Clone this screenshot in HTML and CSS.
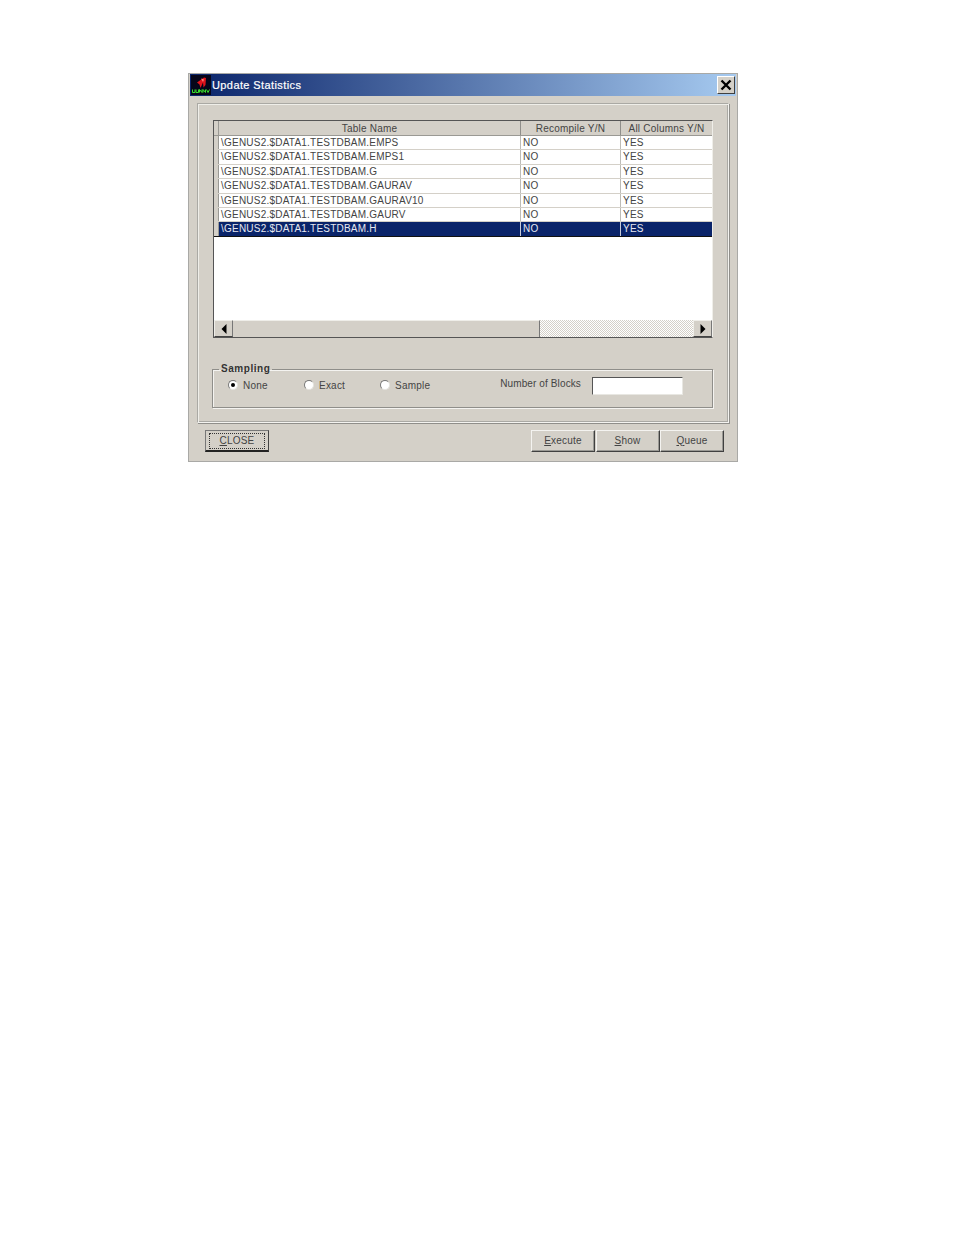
FILE: index.html
```html
<!DOCTYPE html>
<html lang="en">
<head>
<meta charset="utf-8">
<title>Update Statistics</title>
<link rel="stylesheet" href="styles.css">
</head>
<body>
<div class="window">
  <div class="titlebar">
    <svg class="appicon" viewBox="0 0 20 20" width="20" height="20" aria-hidden="true">
      <rect width="20" height="20" fill="#06061a"/>
      <path d="M6 7.5 13 2.5 15 3 14.5 10 12.5 12.5 12 7.5 9.5 13 8.5 9.5z" fill="#e0141c"/>
      <path d="M10 3.5 13 4.5 12 7z" fill="#ff8a80"/>
      <path d="M1.5 14.5v3h2.5v-3M5 14.5v3h2.5v-3M8.5 17.5v-3l2.5 3v-3M12 17.5v-3l2.5 3v-3M15.5 14.5l1.5 3 1.5-3" fill="none" stroke="#38e02c" stroke-width="1"/>
    </svg>
    <span class="title">Update Statistics</span>
    <span class="close">
      <svg viewBox="0 0 12 12" width="12" height="12" aria-hidden="true"><path d="M1.5 1.5 10.5 10.5M10.5 1.5 1.5 10.5" stroke="#000" stroke-width="2.4" fill="none"/></svg>
    </span>
  </div>
  <div class="panel">
    <div class="grid">
      <div class="row head">
        <span class="ind"></span><span class="c1">Table Name</span><span class="c2">Recompile Y/N</span><span class="c3">All Columns Y/N</span>
      </div>
      <div class="row"><span class="ind"></span><span class="c1">\GENUS2.$DATA1.TESTDBAM.EMPS</span><span class="c2">NO</span><span class="c3">YES</span></div>
      <div class="row"><span class="ind"></span><span class="c1">\GENUS2.$DATA1.TESTDBAM.EMPS1</span><span class="c2">NO</span><span class="c3">YES</span></div>
      <div class="row"><span class="ind"></span><span class="c1">\GENUS2.$DATA1.TESTDBAM.G</span><span class="c2">NO</span><span class="c3">YES</span></div>
      <div class="row"><span class="ind"></span><span class="c1">\GENUS2.$DATA1.TESTDBAM.GAURAV</span><span class="c2">NO</span><span class="c3">YES</span></div>
      <div class="row"><span class="ind"></span><span class="c1">\GENUS2.$DATA1.TESTDBAM.GAURAV10</span><span class="c2">NO</span><span class="c3">YES</span></div>
      <div class="row"><span class="ind"></span><span class="c1">\GENUS2.$DATA1.TESTDBAM.GAURV</span><span class="c2">NO</span><span class="c3">YES</span></div>
      <div class="row selected"><span class="ind"></span><span class="c1">\GENUS2.$DATA1.TESTDBAM.H</span><span class="c2">NO</span><span class="c3">YES</span></div>
      <div class="grid-empty"></div>
      <div class="scrollbar">
        <span class="sbtn"><svg viewBox="0 0 6 10" width="6" height="10" aria-hidden="true"><path d="M5.5 0V10L0.5 5z" fill="#000"/></svg></span>
        <span class="thumb"></span>
        <span class="track"></span>
        <span class="sbtn"><svg viewBox="0 0 6 10" width="6" height="10" aria-hidden="true"><path d="M.5 0V10L5.5 5z" fill="#000"/></svg></span>
      </div>
    </div>
    <fieldset class="sampling">
      <legend>Sampling</legend>
      <div class="opts">
        <span class="opt"><span class="radio on"></span>None</span>
        <span class="opt"><span class="radio"></span>Exact</span>
        <span class="opt"><span class="radio"></span>Sample</span>
        <span class="blocks"><span class="blocks-label">Number of Blocks</span><span class="input"></span></span>
      </div>
    </fieldset>
  </div>
  <div class="footer">
    <span class="btn default"><span class="focus"><u>C</u>LOSE</span></span>
    <span class="actions">
      <span class="btn"><span><u>E</u>xecute</span></span>
      <span class="btn"><span><u>S</u>how</span></span>
      <span class="btn"><span><u>Q</u>ueue</span></span>
    </span>
  </div>
</div>
</body>
</html>
```
FILE: styles.css
```css
* { box-sizing: border-box; }
html, body { margin: 0; padding: 0; background: #fff; }
body { height: 1235px; overflow: hidden; font-family: "Liberation Sans", Arial, sans-serif; font-size: 10px; letter-spacing: 0.22px; color: #444; }

.window { width: 550px; height: 389px; margin: 73px 0 0 188px; padding: 0 1px 1px; background: #d4d0c8; border: 1px solid #a9a9a6; }

.titlebar { height: 22px; display: flex; align-items: center; background: linear-gradient(90deg, #0a246a, #a6caf0); }
.appicon { margin-left: 1px; flex: none; }
.title { margin-left: 1px; font-size: 11px; letter-spacing: 0.4px; color: #fff; -webkit-text-stroke: 0.2px #fff; }
.close { margin-left: auto; width: 18px; height: 18px; margin-right: 1px; display: flex; align-items: center; justify-content: center; background: #d4d0c8; border: 1px solid; border-color: #fff #404040 #404040 #fff; }

.panel { height: 320px; margin: 7px 7px 0; padding: 16px 15px 0 15px; border: 1px solid; border-color: #aaa9a4 #f4f3f0 #f4f3f0 #aaa9a4; box-shadow: inset 1px 1px 0 #efeee9, inset -1px -1px 0 #aaa9a4, 1px 1px 0 #8f8e8a; }

.grid { width: 500px; height: 218px; display: flex; flex-direction: column; background: #fff; border-top: 1px solid #555; border-left: 1px solid #555; border-right: 1px solid #efeee9; border-bottom: 1px solid #555; }
.row { flex: none; height: 14.4px; display: flex; line-height: 13px; border-bottom: 1px solid #d4d0c8; white-space: nowrap; }
.row.head { background: #d4d0c8; border-bottom: 1px solid #9a9994; height: 15px; line-height: 15px; }
.ind { flex: none; width: 5px; background: #d4d0c8; border-right: 1px solid #9a9994; }
.c1 { flex: none; width: 302px; padding-left: 2px; border-right: 1px solid #bdbcb7; }
.c2 { flex: none; width: 100px; padding-left: 2px; border-right: 1px solid #bdbcb7; }
.c3 { flex: 1; padding-left: 2px; }
.head .c1, .head .c2, .head .c3 { text-align: center; padding-left: 0; border-right-color: #8f8e8a; }
.selected { background: #0a246a; color: #e6e8f0; border-bottom-color: #111; }
.selected .ind { background: #d4d0c8; }
.selected .c1, .selected .c2 { border-right-color: #c8cbd8; }

.grid-empty { flex: 1; }
.scrollbar { flex: none; height: 17px; display: flex; background: #d4d0c8; }
.sbtn { flex: none; width: 19px; display: flex; align-items: center; justify-content: center; background: #d4d0c8; border: 1px solid; border-color: #efeee9 #777 #444 #efeee9; }
.thumb { flex: none; width: 307px; background: #d4d0c8; border-right: 1px solid #777; border-top: 1px solid #efeee9; }
.track { flex: 1; background: repeating-conic-gradient(#fff 0 25%, #d4d0c8 0 50%) 0 0 / 2px 2px; }

.sampling { width: 501px; height: 46px; margin: 24px 0 0 -1px; padding: 0 29px 0 15px; border: 1px solid #8f8e8a; box-shadow: 1px 1px 0 #f4f3f0, inset 1px 1px 0 #f4f3f0; min-width: 0; }
.sampling legend { height: 14px; margin-left: -9px; padding: 0 2px; font-size: 10px; letter-spacing: 0.55px; line-height: 14px; font-weight: 700; color: #333; }
.opts { display: flex; align-items: center; height: 22px; margin-top: -2px; }
.opt { flex: none; width: 76px; display: flex; align-items: center; gap: 5px; }
.radio { flex: none; width: 10px; height: 10px; border-radius: 50%; background: #fff; display: flex; align-items: center; justify-content: center; border: 1px solid; border-color: #777 #e4e3de #e4e3de #777; }
.radio.on::after { content: ""; width: 4px; height: 4px; border-radius: 50%; background: #000; }
.blocks { margin-left: auto; display: flex; align-items: center; gap: 11px; }
.blocks-label { position: relative; top: -2px; letter-spacing: 0.12px; }
.input { width: 91px; height: 18px; margin-top: 2px; background: #fff; border: 1px solid; border-color: #555 #e8e7e2 #e8e7e2 #555; }

.footer { display: flex; justify-content: space-between; margin: 7px 12px 0 15px; }
.actions { display: flex; gap: 0.5px; }
.btn { width: 64px; height: 22px; padding-bottom: 2px; display: flex; align-items: center; justify-content: center; background: #d4d0c8; border: 1px solid; border-color: #f4f3f0 #404040 #404040 #f4f3f0; box-shadow: inset -1px -1px 0 #9a9994; color: #444; }
.btn.default { padding-bottom: 0; border-bottom-width: 2px; border-color: #777 #444 #222 #777; box-shadow: none; }
.focus { width: 56px; height: 16px; line-height: 14px; text-align: center; border: 1px dotted #333; }
```
